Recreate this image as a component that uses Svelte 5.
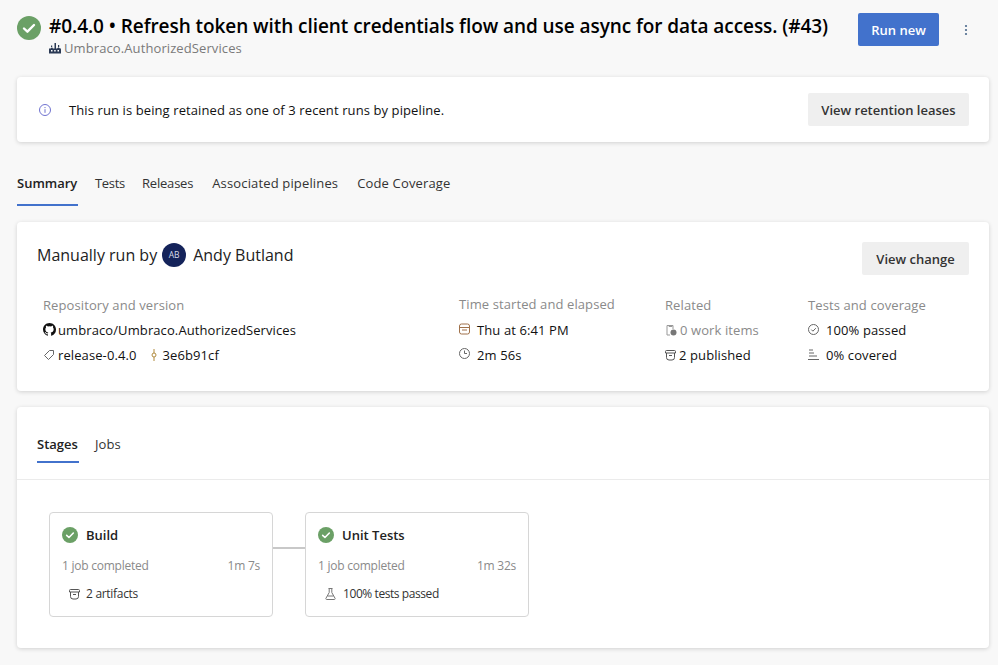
<script>
  const tabs = ['Tests', 'Releases', 'Associated pipelines', 'Code Coverage'];
</script>

{#snippet check(size)}
  <svg class="check" width={size} height={size} viewBox="0 0 24 24" aria-hidden="true">
    <circle cx="12" cy="12" r="12" fill="#6ba066" />
    <path d="M7 12.5l3.4 3.2L17 9" fill="none" stroke="#fff" stroke-width="2.4" stroke-linecap="round" stroke-linejoin="round" />
  </svg>
{/snippet}

{#snippet artifact(color)}
  <svg class="ic" width="11" height="12" viewBox="0 0 11 12" fill="none" stroke={color} stroke-width="1" aria-hidden="true">
    <path d="M1.500 1.500h8a1 1 0 0 1 1 1V4H.5V2.500a1 1 0 0 1 1-1zM1.500 4v4.500a2.500 2.500 0 0 0 2.500 2.500h3a2.500 2.500 0 0 0 2.500-2.500V4M4 6.500h3" />
  </svg>
{/snippet}

<div class="page">
  <header class="head">
    {@render check(24)}
    <div class="titles">
      <h1>#0.4.0 • Refresh token with client credentials flow and use async for data access. (#43)</h1>
      <div class="sub">
        <svg width="12" height="12" viewBox="0 0 12 12" aria-hidden="true"><path fill="#2b3a55" d="M0 11.500V6.500h1.500L3 5.200l1 1.300h1.500V1h1.500v5.500h1L9.500 5.200 11 6.500h1v5zM2 3.500h1.200v1.500H2zM9 3h1.200v2H9z" /><path fill="#fff" d="M2 8h1.500v1.500H2zM5.200 8h1.500v1.500H5.200zM8.500 8H10v1.500H8.500z" /></svg>
        <span>Umbraco.AuthorizedServices</span>
      </div>
    </div>
    <button class="run">Run new</button>
    <svg class="more" width="4" height="12" viewBox="0 0 4 12" aria-hidden="true"><g fill="#4b6a8c"><circle cx="2" cy="2" r="1.100" /><circle cx="2" cy="6" r="1.100" /><circle cx="2" cy="10" r="1.100" /></g></svg>
  </header>

  <section class="card banner">
    <svg width="12" height="12" viewBox="0 0 12 12" fill="none" stroke="#6f72cf" aria-hidden="true"><circle cx="6" cy="6" r="5.500" /><path d="M6 5.200v3.600M6 3v1.100" /></svg>
    <span class="msg">This run is being retained as one of 3 recent runs by pipeline.</span>
    <button class="sec">View retention leases</button>
  </section>

  <nav class="tabs">
    <span class="tab active">Summary</span>
    {#each tabs as t}<span class="tab">{t}</span>{/each}
  </nav>

  <section class="card summary">
    <div class="sumhead">
      <span class="by">Manually run by</span>
      <span class="avatar">AB</span>
      <span class="by">Andy Butland</span>
      <button class="sec change">View change</button>
    </div>
    <div class="cols">
      <div class="col c1">
        <div class="lbl">Repository and version</div>
        <div class="row">
          <svg class="ic" width="13" height="13" viewBox="0 0 16 16" aria-hidden="true"><path fill="#111" d="M8 0C3.58 0 0 3.58 0 8c0 3.54 2.29 6.53 5.47 7.59.4.07.55-.17.55-.38v-1.34c-2.23.48-2.7-1.07-2.7-1.07-.36-.92-.89-1.17-.89-1.17-.73-.5.05-.49.05-.49.8.06 1.23.83 1.23.83.71 1.22 1.87.87 2.33.66.07-.52.28-.87.51-1.07-1.78-.2-3.64-.89-3.64-3.95 0-.87.31-1.59.82-2.15-.08-.2-.36-1.02.08-2.12 0 0 .67-.21 2.2.82a7.6 7.6 0 0 1 4 0c1.53-1.04 2.2-.82 2.2-.82.44 1.1.16 1.92.08 2.12.51.56.82 1.27.82 2.15 0 3.07-1.87 3.75-3.65 3.95.29.25.54.73.54 1.48v2.2c0 .21.15.46.55.38A8 8 0 0 0 16 8c0-4.42-3.58-8-8-8z" /></svg>
          <span class="t2">umbraco/Umbraco.AuthorizedServices</span>
        </div>
        <div class="row">
          <svg class="ic tag" width="12" height="12" viewBox="0 0 12 12" fill="none" stroke="#666" aria-hidden="true"><path d="M6.500 1.500h4v4l-5 5-4-4z" /></svg>
          <span>release-0.4.0</span>
          <svg class="ic commit" width="8" height="12" viewBox="0 0 8 12" fill="none" stroke="#b08a3c" aria-hidden="true"><circle cx="4" cy="6" r="2" /><path d="M4 0v4M4 8v4" /></svg>
          <span>3e6b91cf</span>
        </div>
      </div>
      <div class="col c2">
        <div class="lbl">Time started and elapsed</div>
        <div class="row">
          <svg class="ic" width="11" height="12" viewBox="0 0 11 12" fill="none" stroke="#a0714a" aria-hidden="true"><rect x=".5" y="1" width="10" height="10" rx="2" /><path d="M.5 4.500h10M3 7h5" /></svg>
          <span>Thu at 6:41 PM</span>
        </div>
        <div class="row">
          <svg class="ic" width="11" height="11" viewBox="0 0 11 11" fill="none" stroke="#666" aria-hidden="true"><circle cx="5.500" cy="5.500" r="5" /><path d="M5.500 2.500v3h2.500" /></svg>
          <span>2m 56s</span>
        </div>
      </div>
      <div class="col c3">
        <div class="lbl">Related</div>
        <div class="row muted">
          <svg class="ic" width="12" height="12" viewBox="0 0 12 12" fill="none" stroke="#999" aria-hidden="true"><path d="M5 11H2V1.500h6V5M4 1v1.500h3V1" /><circle cx="8.500" cy="8.500" r="3" fill="#777" stroke="none" /></svg>
          <span>0 work items</span>
        </div>
        <div class="row">
          {@render artifact('#555')}
          <span>2 published</span>
        </div>
      </div>
      <div class="col c4">
        <div class="lbl">Tests and coverage</div>
        <div class="row">
          <svg class="ic" width="11" height="11" viewBox="0 0 11 11" fill="none" stroke="#666" aria-hidden="true"><circle cx="5.500" cy="5.500" r="5" /><path d="M3.300 5.600l1.600 1.600 2.900-3" /></svg>
          <span class="ind">100% passed</span>
        </div>
        <div class="row">
          <svg class="ic" width="11" height="11" viewBox="0 0 11 11" fill="none" stroke="#666" aria-hidden="true"><path d="M1 1h4M1 4h5M1 7h8M0 10.500h11" /></svg>
          <span class="ind">0% covered</span>
        </div>
      </div>
    </div>
  </section>

  <section class="card stages">
    <div class="subtabs">
      <span class="subtab active">Stages</span>
      <span class="subtab">Jobs</span>
    </div>
    <div class="graph">
      <div class="node">
        <div class="nhead">{@render check(16)}<span>Build</span></div>
        <div class="nmeta"><span>1 job completed</span><span>1m 7s</span></div>
        <div class="nfoot">{@render artifact('#555')}<span>2 artifacts</span></div>
      </div>
      <div class="link"></div>
      <div class="node">
        <div class="nhead">{@render check(16)}<span>Unit Tests</span></div>
        <div class="nmeta"><span>1 job completed</span><span>1m 32s</span></div>
        <div class="nfoot tests">
          <svg class="ic" width="11" height="12" viewBox="0 0 11 12" fill="none" stroke="#777" aria-hidden="true"><path d="M3.500.5h4M4.200.5v4L1 10.200a.8.8 0 0 0 .7 1.300h7.600a.8.8 0 0 0 .7-1.300L6.800 4.500v-4M2.500 8h6" /></svg>
          <span>100% tests passed</span>
        </div>
      </div>
    </div>
  </section>
</div>

<style>
  :global(body) {
    margin: 0;
    background: #f8f8f8;
  }
  .page {
    font-family: "Open Sans", "Noto Sans", sans-serif;
    font-size: 13px;
    letter-spacing: 0.1px;
    color: #111;
    padding: 12px 9px 17px 17px;
    height: 665px;
    box-sizing: border-box;
    overflow: hidden;
  }
  .head {
    display: flex;
    align-items: flex-start;
    height: 65px;
  }
  .check { flex: none; display: block; }
  .head > .check { margin-top: 4px; }
  .titles { margin-left: 8px; flex: 1; min-width: 0; }
  h1 {
    margin: 0;
    font-size: 19px;
    line-height: 28px;
    font-weight: 600;
    letter-spacing: -0.065px;
    color: #000;
    white-space: nowrap;
  }
  .sub {
    display: flex;
    align-items: center;
    gap: 3px;
    color: #7a7a7a;
    line-height: 16px;
  }
  button {
    font: inherit;
    font-weight: 600;
    letter-spacing: 0;
    border: 0;
    border-radius: 2px;
    padding: 0;
  }
  .run {
    background: #4272cc;
    color: #fff;
    width: 81px;
    height: 33px;
    margin-top: 1px;
    margin-left: 20px;
    flex: none;
  }
  .more { margin: 12px 21px 0 25px; flex: none; }
  .card {
    background: #fff;
    border-radius: 4px;
    box-shadow: 0 1px 4px rgba(0,0,0,.16);
  }
  .banner {
    height: 65px;
    display: flex;
    align-items: center;
    padding: 0 20px 0 22px;
    box-sizing: border-box;
  }
  .msg { margin-left: 18px; flex: 1; }
  .sec {
    background: #efefef;
    color: #333;
    height: 33px;
    width: 161px;
  }
  .tabs {
    display: flex;
    gap: 17px;
    height: 64px;
    padding-top: 30px;
    box-sizing: border-box;
    margin-bottom: 16px;
    color: #333;
  }
  .tab { line-height: 22px; height: 34px; box-sizing: border-box; }
  .tab:nth-child(2) { letter-spacing: -0.3px; }
  .tab:nth-child(3) { letter-spacing: -0.2px; }
  .tab:nth-child(4) { margin-left: 2px; letter-spacing: 0.15px; }
  .tab:nth-child(5) { margin-left: 2px; letter-spacing: 0.15px; }
  .tab.active { font-weight: 600; border-bottom: 2px solid #4272cc; color: #222; letter-spacing: 0; width: 61px; }
  .summary {
    height: 169px;
    padding: 20px 20px 0;
    box-sizing: border-box;
  }
  .sumhead {
    display: flex;
    align-items: center;
    gap: 5px;
    font-size: 16px;
    letter-spacing: 0;
    height: 33px;
    color: #222;
  }
  .by { margin-top: -8px; }
  .avatar {
    width: 24px;
    height: 24px;
    border-radius: 50%;
    background: #14235a;
    color: #d8dcea;
    font-size: 8.5px;
    display: flex;
    align-items: center;
    justify-content: center;
    margin: -8px 2px 0 0;
  }
  .change {
    width: 107px;
    margin-left: auto;
    font-size: 13px;
  }
  .cols {
    display: flex;
    margin-top: 20px;
  }
  .col { flex: none; }
  .c1 { width: 416px; padding-left: 6px; }
  .c2 { width: 206px; }
  .c3 { width: 143px; }
  .lbl { color: #8a8a8a; line-height: 20px; margin-bottom: 2px; }
  .c2 .lbl { margin-top: -1px; margin-bottom: 3px; }
  .row {
    display: flex;
    align-items: center;
    height: 25px;
    gap: 3px;
  }
  .c2 .row { gap: 7px; }
  .c2 .ic { margin-top: -2px; }
  .t2 { margin-left: -1px; }
  .ind { margin-left: 4px; }
  .muted { color: #8a8a8a; }
  .commit { margin-left: 10px; margin-right: 2px; }
  .stages { height: 241px; margin-top: 16px; }
  .subtabs {
    display: flex;
    gap: 16px;
    height: 73px;
    padding: 21px 20px 0;
    box-sizing: border-box;
    border-bottom: 1px solid #ebebeb;
  }
  .subtab { line-height: 32px; height: 35px; box-sizing: border-box; color: #333; }
  .subtab.active { font-weight: 600; color: #222; border-bottom: 2px solid #4272cc; letter-spacing: 0; width: 42px; }
  .graph {
    display: flex;
    align-items: flex-start;
    padding: 32px 0 0 32px;
  }
  .node {
    width: 224px;
    height: 105px;
    box-sizing: border-box;
    border: 1px solid #d6d6d6;
    border-radius: 4px;
    padding: 13px 12px 0;
    background: #fff;
  }
  .nhead {
    display: flex;
    align-items: center;
    gap: 8px;
    font-weight: 600;
    letter-spacing: 0;
    line-height: 18px;
    color: #222;
  }
  .nmeta {
    display: flex;
    justify-content: space-between;
    color: #8a8a8a;
    font-size: 12px;
    letter-spacing: -0.24px;
    margin-top: 14px;
    line-height: 16px;
  }
  .nfoot {
    display: flex;
    align-items: center;
    gap: 6px;
    font-size: 12px;
    letter-spacing: -0.3px;
    line-height: 16px;
    margin-top: 12px;
    padding-left: 7px;
    color: #333;
  }
  .nfoot.tests { gap: 7px; letter-spacing: -0.42px; }
  .link {
    width: 32px;
    height: 2px;
    background: #c8c8c8;
    margin-top: 35px;
  }
</style>
